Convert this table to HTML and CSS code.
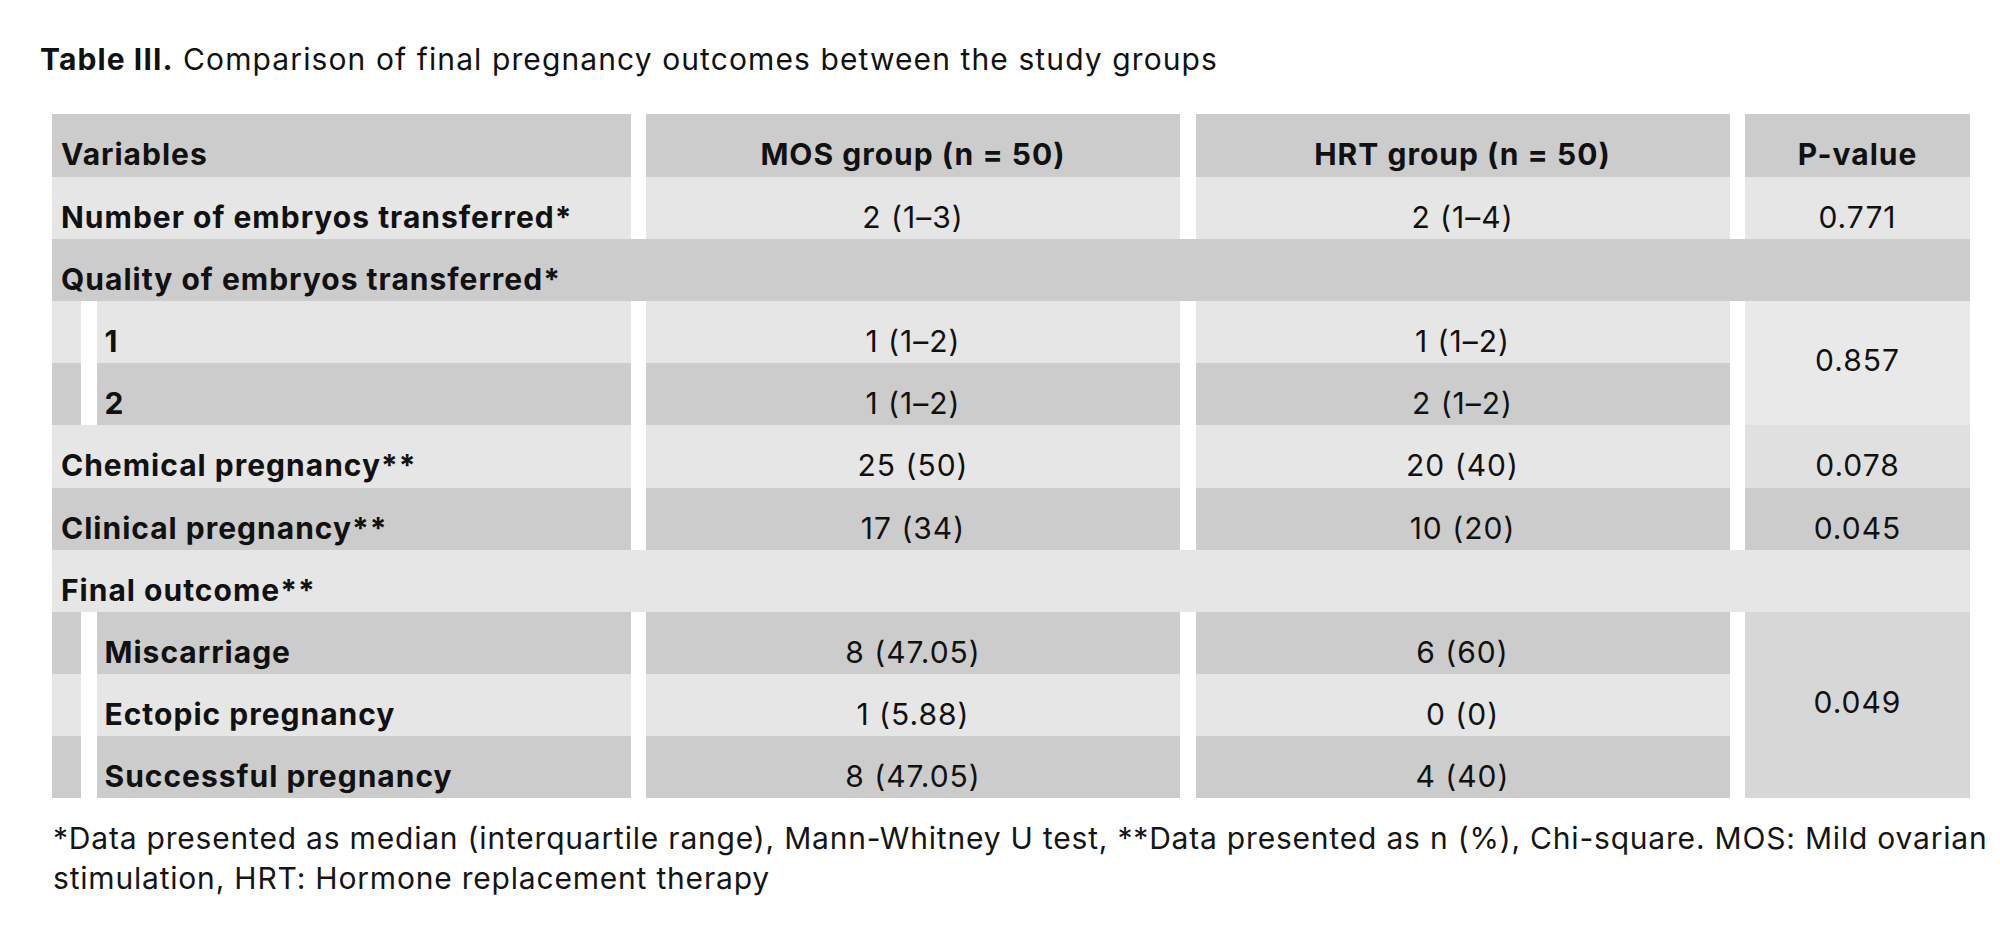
FILE: index.html
```html
<!DOCTYPE html>
<html lang="en">
<head>
<meta charset="utf-8">
<title>Table III</title>
<link rel="stylesheet" href="styles.css">
</head>
<body>
<div class="page">
  <p class="caption"><b>Table III.</b> Comparison of final pregnancy outcomes between the study groups</p>
  <div class="tbl" role="table">
    <div class="c dk lab" role="columnheader">Variables</div>
    <div class="c dk ctr hd" role="columnheader">MOS group (n = 50)</div>
    <div class="c dk ctr hd" role="columnheader">HRT group (n = 50)</div>
    <div class="c dk ctr hd" role="columnheader">P-value</div>

    <div class="c lt lab">Number of embryos transferred*</div>
    <div class="c lt ctr">2 (1–3)</div>
    <div class="c lt ctr">2 (1–4)</div>
    <div class="c lt ctr">0.771</div>

    <div class="c dk lab full">Quality of embryos transferred*</div>

    <div class="c lt"></div>
    <div class="c lt sub">1</div>
    <div class="c lt ctr">1 (1–2)</div>
    <div class="c lt ctr">1 (1–2)</div>
    <div class="c p857 mid r2">0.857</div>
    <div class="c dk"></div>
    <div class="c dk sub">2</div>
    <div class="c dk ctr">1 (1–2)</div>
    <div class="c dk ctr">2 (1–2)</div>

    <div class="c lt lab">Chemical pregnancy**</div>
    <div class="c lt ctr">25 (50)</div>
    <div class="c lt ctr">20 (40)</div>
    <div class="c p078 ctr">0.078</div>

    <div class="c dk lab">Clinical pregnancy**</div>
    <div class="c dk ctr">17 (34)</div>
    <div class="c dk ctr">10 (20)</div>
    <div class="c dk ctr">0.045</div>

    <div class="c lt lab full">Final outcome**</div>

    <div class="c dk"></div>
    <div class="c dk sub">Miscarriage</div>
    <div class="c dk ctr">8 (47.05)</div>
    <div class="c dk ctr">6 (60)</div>
    <div class="c p049 mid r3">0.049</div>
    <div class="c lt"></div>
    <div class="c lt sub">Ectopic pregnancy</div>
    <div class="c lt ctr">1 (5.88)</div>
    <div class="c lt ctr">0 (0)</div>
    <div class="c dk"></div>
    <div class="c dk sub">Successful pregnancy</div>
    <div class="c dk ctr">8 (47.05)</div>
    <div class="c dk ctr">4 (40)</div>
  </div>
  <p class="note">*Data presented as median (interquartile range), Mann-Whitney U test, **Data presented as n (%), Chi-square. MOS: Mild ovarian stimulation, HRT: Hormone replacement therapy</p>
</div>
</body>
</html>
```
FILE: styles.css
```css
html, body {
  margin: 0;
  padding: 0;
  background: #ffffff;
}

body {
  font-family: Inter, "Liberation Sans", sans-serif;
  color: #111111;
}

.page {
  width: 2000px;
}

.caption {
  margin: 39px 0 0 40px;
  font-size: 30px;
  line-height: 40px;
  letter-spacing: 1.1px;
  font-weight: 400;
}

.caption b {
  font-weight: 700;
}

.tbl {
  display: grid;
  grid-template-columns: 29px 534px 534px 534px 225px;
  grid-template-rows: 63px 62px 62px 62px 62px 63px 62px 62px 62px 62px 62px;
  column-gap: 15.5px;
  width: max-content;
  margin: 35px 0 0 52px;
  font-size: 30px;
  line-height: 40px;
  letter-spacing: 1px;
}

.c {
  box-sizing: border-box;
  padding-top: 20px;
  white-space: nowrap;
}

.dk { background: #cccccc; }
.lt { background: #e6e6e6; }
.p857 { background: #e9e9e9; }
.p078 { background: #e0e0e0; }
.p049 { background: #d7d7d7; }

.lab {
  grid-column: span 2;
  padding-left: 9px;
  font-weight: 700;
}

.full {
  grid-column: 1 / -1;
}

.sub {
  padding-left: 8px;
  font-weight: 700;
}

.hd {
  font-weight: 700;
}

.ctr {
  text-align: center;
}

.mid {
  display: flex;
  align-items: center;
  justify-content: center;
  padding-top: 0;
  padding-bottom: 6px;
}

.r2 { grid-row: span 2; }
.r3 { grid-row: span 3; }

.note {
  margin: 20px 0 0 53px;
  width: 1940px;
  font-size: 30px;
  line-height: 40px;
  letter-spacing: 0.8px;
  color: #151515;
}
```
